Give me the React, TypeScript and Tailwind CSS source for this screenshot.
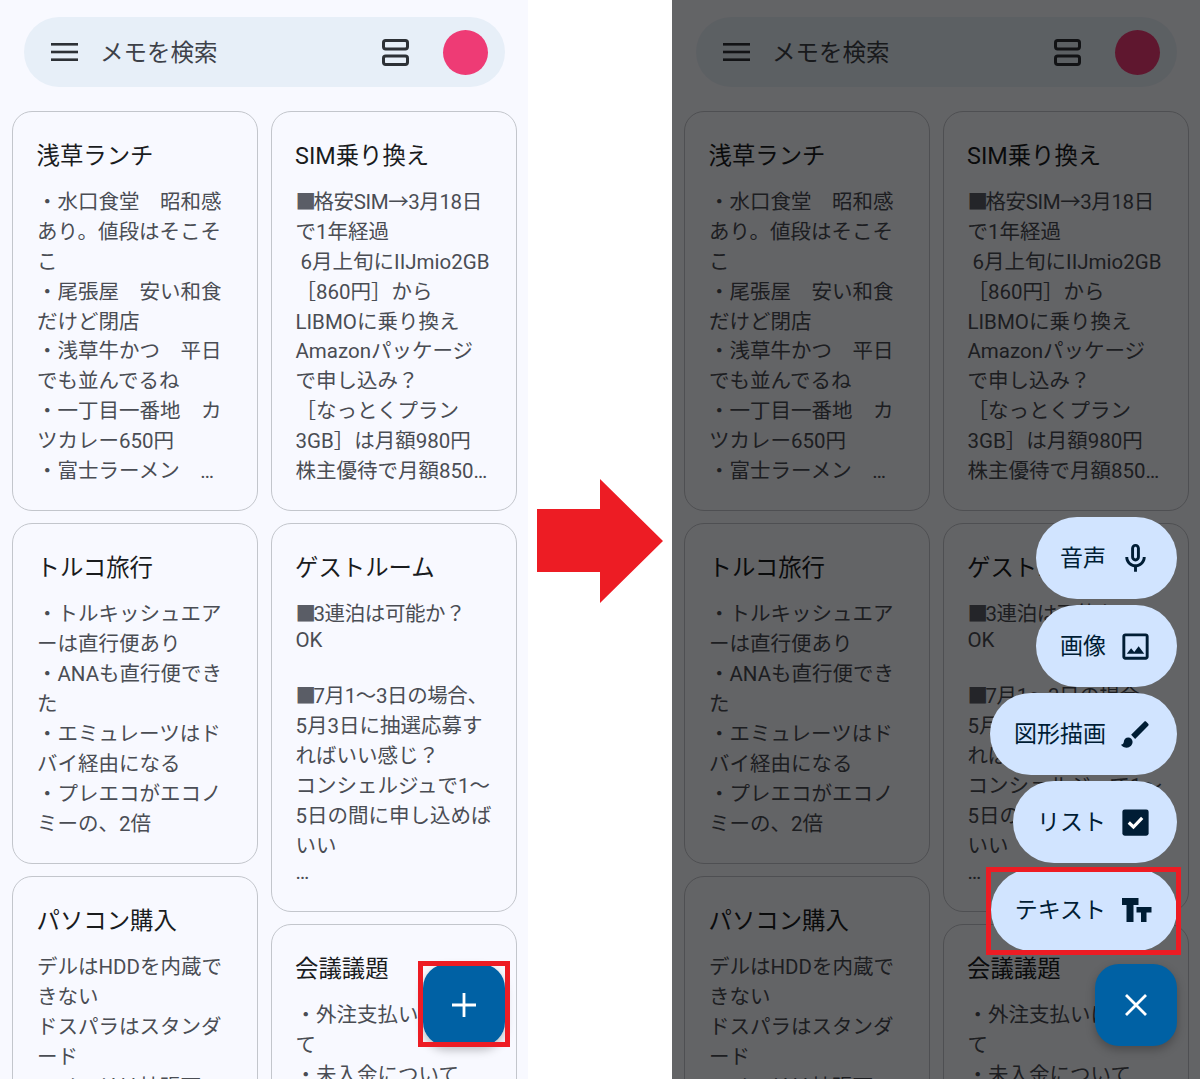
import React from "react";

type Note = { title: string; lines: string[] };

const col1: Note[] = [
  {
    title: "浅草ランチ",
    lines: ["・水口食堂　昭和感", "あり。値段はそこそ", "こ", "・尾張屋　安い和食", "だけど閉店", "・浅草牛かつ　平日", "でも並んでるね", "・一丁目一番地　カ", "ツカレー650円", "・富士ラーメン　…"],
  },
  {
    title: "トルコ旅行",
    lines: ["・トルキッシュエア", "ーは直行便あり", "・ANAも直行便でき", "た", "・エミュレーツはド", "バイ経由になる", "・プレエコがエコノ", "ミーの、2倍"],
  },
  {
    title: "パソコン購入",
    lines: ["デルはHDDを内蔵で", "きない", "ドスパラはスタンダ", "ード", "・メモリは拡張可"],
  },
];

const col2: Note[] = [
  {
    title: "SIM乗り換え",
    lines: ["■格安SIM→3月18日", "で1年経過", " 6月上旬にIIJmio2GB", "［860円］から", "LIBMOに乗り換え", "Amazonパッケージ", "で申し込み？", "［なっとくプラン", "3GB］は月額980円", "株主優待で月額850…"],
  },
  {
    title: "ゲストルーム",
    lines: ["■3連泊は可能か？", "OK", " ", "■7月1〜3日の場合、", "5月3日に抽選応募す", "ればいい感じ？", "コンシェルジュで1〜", "5日の間に申し込めば", "いい", "…"],
  },
  {
    title: "会議議題",
    lines: ["・外注支払いについ", "て", "・未入金について"],
  },
];

function Line({ text }: { text: string }) {
  if (text === " ") return <div className="h-[26px]" />;
  if (text === "OK" || text === "…") {
    return <div className="h-[26px] -translate-y-[3px] leading-[26px] whitespace-pre">{text}</div>;
  }
  if (text.startsWith("■")) {
    return (
      <div className="h-[29.9px] leading-[29.9px] tracking-[-0.4px] whitespace-pre">
        <span className="tracking-[-2.5px] text-[#5a5d66]">■</span>
        {text.slice(1)}
      </div>
    );
  }
  return <div className="h-[29.9px] leading-[29.9px] whitespace-pre">{text}</div>;
}

function Card({ note }: { note: Note }) {
  return (
    <div className="rounded-[20px] border-[1.5px] border-[#c3c6cc] pt-[27px] pr-[20px] pb-[23px] pl-[24px]">
      <div className="-ml-[0.5px] h-[34px] text-[23.4px] leading-[34px] text-[#1a1c1e] whitespace-pre">{note.title}</div>
      <div className="mt-[15px] text-[20.5px] text-[#4a4d54]">
        {note.lines.map((l, i) => (
          <Line key={i} text={l} />
        ))}
      </div>
    </div>
  );
}

function Icon({ d }: { d: string }) {
  return (
    <svg viewBox="0 0 24 24" className="h-[35px] w-[35px] shrink-0" fill="#001d35">
      <path d={d} />
    </svg>
  );
}

function CheckIcon() {
  return (
    <svg viewBox="0 0 24 24" className="h-[35px] w-[35px] shrink-0">
      <rect x="3" y="3" width="18" height="18" rx="1.6" fill="#001d35" />
      <path d="M7.4 12l3.2 3.1 6-6.3" fill="none" stroke="#fff" strokeWidth="2.2" />
    </svg>
  );
}

function TextIcon() {
  return (
    <svg viewBox="0 0 35 35" className="h-[35px] w-[35px] shrink-0" fill="#001d35">
      <path d="M4 5H20.5V12H15.5V29H8.5V12H4Z" />
      <path d="M18.5 14H33.5V19.5H28.5V29H23V19.5H18.5Z" />
    </svg>
  );
}

function Pill({ label, icon, marked }: { label: string; icon: React.ReactNode; marked?: boolean }) {
  return (
    <div className="relative flex h-[82px] items-center gap-[12px] rounded-[41px] bg-[#d1e4ff] px-[24px] text-[23px] text-[#001d35]">
      <span className="pt-[3px] whitespace-pre">{label}</span>
      {icon}
      {marked && <div className="absolute -top-[2px] -bottom-[4px] -left-[5px] -right-[4px] border-[5px] border-[#ed1c24]" />}
    </div>
  );
}

function Phone({ dim }: { dim?: boolean }) {
  return (
    <div className="relative h-[1079px] w-[528px] shrink-0 overflow-hidden bg-[#f8f9ff]">
      <div className="mt-[17px] ml-[24px] flex h-[70px] w-[481px] items-center rounded-[35px] bg-[#e7eff8] pl-[27px] pr-[17px]">
        <svg viewBox="0 0 27 18" className="h-[18px] w-[27px] shrink-0" fill="#2d3136">
          <rect y="0" width="27" height="2.6" />
          <rect y="7.7" width="27" height="2.6" />
          <rect y="15.4" width="27" height="2.6" />
        </svg>
        <span className="ml-[22px] pt-[4px] text-[23.5px] text-[#3d4148]">メモを検索</span>
        <svg viewBox="0 0 27 27" className="ml-auto h-[27px] w-[27px] shrink-0" fill="none" stroke="#2d3136" strokeWidth="3">
          <rect x="1.5" y="1.5" width="24" height="8.5" rx="2.2" />
          <rect x="1.5" y="17" width="24" height="8.5" rx="2.2" />
        </svg>
        <div className="ml-[34px] h-[45px] w-[45px] shrink-0 rounded-full bg-[#ee3b75]" />
      </div>

      <div className="mt-[24px] flex gap-[12.5px] pl-[12px]">
        <div className="flex w-[246px] shrink-0 flex-col gap-[12.5px]">
          {col1.map((n) => (
            <Card key={n.title} note={n} />
          ))}
        </div>
        <div className="flex w-[246px] shrink-0 flex-col gap-[12.5px]">
          {col2.map((n) => (
            <Card key={n.title} note={n} />
          ))}
        </div>
      </div>

      {dim && <div className="absolute inset-0 bg-[#000000]/60" />}

      <div className="absolute right-[23px] bottom-[33px] flex flex-col items-end">
        {dim && (
          <div className="mb-[13px] flex flex-col items-end gap-[6px]">
            <Pill label="音声" icon={<Icon d="M12 14c1.66 0 3-1.34 3-3V5c0-1.66-1.34-3-3-3S9 3.34 9 5v6c0 1.66 1.34 3 3 3zm-1-9c0-.55.45-1 1-1s1 .45 1 1v6c0 .55-.45 1-1 1s-1-.45-1-1V5zm6 6c0 2.76-2.24 5-5 5s-5-2.24-5-5H5c0 3.53 2.61 6.43 6 6.92V21h2v-3.08c3.39-.49 6-3.39 6-6.92h-2z" />} />
            <Pill label="画像" icon={<Icon d="M19 5v14H5V5h14m0-2H5c-1.1 0-2 .9-2 2v14c0 1.1.9 2 2 2h14c1.1 0 2-.9 2-2V5c0-1.1-.9-2-2-2zm-4.86 8.86l-3 3.87L9 13.14 6 17h12l-3.86-5.14z" />} />
            <Pill label="図形描画" icon={<Icon d="M7 14c-1.66 0-3 1.34-3 3 0 1.31-1.16 2-2 2 .92 1.22 2.49 2 4 2 2.21 0 4-1.79 4-4 0-1.66-1.34-3-3-3zm13.71-9.37l-1.34-1.34c-.39-.39-1.02-.39-1.41 0L9 12.25 11.75 15l8.96-8.96c.39-.39.39-1.03 0-1.41z" />} />
            <Pill label="リスト" icon={<CheckIcon />} />
            <Pill label="テキスト" marked icon={<TextIcon />} />
          </div>
        )}
        <div className="relative flex h-[82px] w-[82px] items-center justify-center rounded-[24px] bg-[#0061a4] shadow-[0_4px_10px_rgba(0,0,0,0.25)]">
          <svg viewBox="0 0 26 26" className="h-[26px] w-[26px]" stroke="#ffffff" strokeWidth="2.8">
            {dim ? <path d="M3 3L23 23M23 3L3 23" /> : <path d="M13 1V25M1 13H25" />}
          </svg>
          {!dim && <div className="absolute -top-[3px] -bottom-[1px] -left-[5px] -right-[5px] border-[5px] border-[#ed1c24]" />}
        </div>
      </div>
    </div>
  );
}

export default function App() {
  return (
    <div lang="ja" className="flex h-[1079px] w-[1200px] overflow-hidden bg-white font-['Roboto','Noto_Sans_CJK_JP',sans-serif]">
      <Phone />
      <div className="flex flex-1 items-center justify-center pt-[3px]">
        <svg viewBox="0 0 126 124" className="h-[124px] w-[126px]" fill="#ed1c24">
          <path d="M0 30H63V0L126 62L63 124V93H0Z" />
        </svg>
      </div>
      <Phone dim />
    </div>
  );
}
